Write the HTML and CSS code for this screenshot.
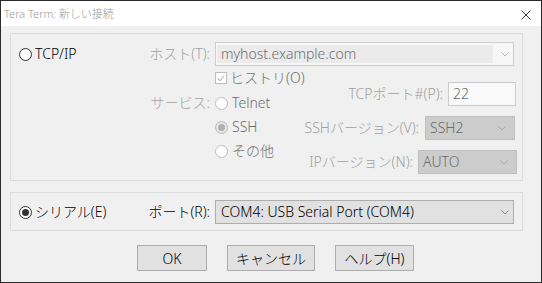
FILE: index.html
```html
<!DOCTYPE html>
<html lang="ja">
<head>
    <meta charset="UTF-8">
    <title>Tera Term: 新しい接続</title>
    <link rel="stylesheet" href="styles.css">
</head>
<body>
    <div class="window">
        <div class="titlebar">
            <span class="title">Tera Term: 新しい接続</span>
            <svg class="close" width="10" height="10" viewBox="0 0 10 10">
                <path d="M0.5 0.5 L9.5 9.5 M9.5 0.5 L0.5 9.5" stroke="#333" stroke-width="1" fill="none"/>
            </svg>
        </div>
        <div class="content">
            <div class="group group-tcp">
                <div class="row-host">
                    <div class="left-col">
                        <span class="radio-main"><span class="rb"></span>TCP/IP</span>
                        <span class="lbl">ホスト(T):</span>
                    </div>
                    <div class="combo combo-host">
                        <span class="edit">myhost.example.com</span>
                        <svg class="chev" width="8" height="5" viewBox="0 0 8 5"><path d="M0.5 0.5 L4 4 L7.5 0.5" stroke="#b5b5b5" fill="none"/></svg>
                    </div>
                </div>
                <div class="tcp-lower">
                    <div class="left-col svc-label"><span class="lbl">サービス:</span></div>
                    <div class="svc-list">
                        <div class="check-row">
                            <span class="cb">
                                <svg width="11" height="11" viewBox="0 0 11 11"><path d="M2 5.5 L4.5 8 L9 2.5" stroke="#b5b5b5" stroke-width="1.2" fill="none"/></svg>
                            </span>
                            <span class="dim">ヒストリ(O)</span>
                        </div>
                        <div class="opt"><span class="rb off"></span><span class="dim">Telnet</span></div>
                        <div class="opt"><span class="rb off on"></span><span class="dim">SSH</span></div>
                        <div class="opt"><span class="rb off"></span><span class="dim">その他</span></div>
                    </div>
                    <div class="fields">
                        <div class="field f-port">
                            <span class="lbl">TCPポート#(P):</span>
                            <span class="textbox">22</span>
                        </div>
                        <div class="field f-ssh">
                            <span class="lbl">SSHバージョン(V):</span>
                            <span class="select">SSH2<svg class="chev" width="8" height="5" viewBox="0 0 8 5"><path d="M0.5 0.5 L4 4 L7.5 0.5" stroke="#a8a8a8" fill="none"/></svg></span>
                        </div>
                        <div class="field f-ip">
                            <span class="lbl">IPバージョン(N):</span>
                            <span class="select">AUTO<svg class="chev" width="8" height="5" viewBox="0 0 8 5"><path d="M0.5 0.5 L4 4 L7.5 0.5" stroke="#a8a8a8" fill="none"/></svg></span>
                        </div>
                    </div>
                </div>
            </div>

            <div class="group group-serial">
                <div class="left-col">
                    <span class="radio-main"><span class="rb on"></span>シリアル(E)</span>
                    <span class="lbl-on">ポート(R):</span>
                </div>
                <div class="combo combo-port">
                    <span>COM4: USB Serial Port (COM4)</span>
                    <svg class="chev" width="8" height="5" viewBox="0 0 8 5"><path d="M0.5 0.5 L4 4 L7.5 0.5" stroke="#8a8a8a" fill="none"/></svg>
                </div>
            </div>

            <div class="buttons">
                <button class="btn btn-ok">OK</button>
                <button class="btn btn-cancel">キャンセル</button>
                <button class="btn btn-help">ヘルプ(H)</button>
            </div>
        </div>
    </div>
</body>
</html>
```

FILE: styles.css
```css
body {
    margin: 0;
    padding: 0;
    background-color: #f0f0f0;
    font-family: "Noto Sans", "Noto Sans CJK JP", sans-serif;
    font-size: 14px;
    font-weight: 300;
    line-height: 16px;
    white-space: nowrap;
}
.window {
    width: 542px;
    height: 283px;
    box-sizing: border-box;
    border: 1px solid #2b2b2b;
    background-color: #f0f0f0;
}
.titlebar {
    height: 25px;
    background-color: white;
    display: flex;
    justify-content: space-between;
    align-items: center;
    padding-left: 3px;
    padding-right: 10px;
}
.title {
    font-size: 11px;
    color: #999;
}
.close {
    margin-top: 2px;
}
.content {
    padding: 7px 0 0 9px;
}
.group {
    box-sizing: border-box;
    width: 513px;
    border: 1px solid #dcdcdc;
}
.group-tcp {
    height: 148px;
    padding-top: 8px;
}
.group-serial {
    height: 39px;
    margin-top: 11px;
    padding-top: 7px;
    display: flex;
}
.row-host {
    display: flex;
    height: 24px;
}
.left-col {
    width: 204px;
    flex-shrink: 0;
    box-sizing: border-box;
    padding-left: 8px;
    padding-right: 5px;
    display: flex;
    justify-content: space-between;
    align-items: center;
    height: 24px;
}
.radio-main {
    display: flex;
    align-items: center;
    color: #000;
}
.lbl {
    color: #a0a0a0;
}
.lbl-on {
    color: #000;
}
.dim {
    color: #6d6d6d;
}
.rb {
    width: 13px;
    height: 13px;
    flex-shrink: 0;
    box-sizing: border-box;
    border: 1px solid #333;
    border-radius: 50%;
    background-color: white;
    margin-right: 3px;
    display: flex;
    align-items: center;
    justify-content: center;
}
.rb.on::after {
    content: "";
    width: 7px;
    height: 7px;
    border-radius: 50%;
    background-color: #333;
}
.rb.off {
    border-color: #bcbcbc;
    margin-right: 4px;
}
.rb.off.on {
    background-color: #e6e6e6;
}
.rb.off.on::after {
    background-color: #b0b0b0;
}
.combo {
    box-sizing: border-box;
    width: 299px;
    height: 24px;
    display: flex;
    align-items: center;
    justify-content: space-between;
    padding-right: 4px;
}
.combo-host {
    border: 1px solid #cccccc;
    background-color: #f7f7f7;
    padding-left: 1px;
}
.combo-host .edit {
    flex: 1;
    height: 18px;
    line-height: 18px;
    background-color: #ebebeb;
    color: #6d6d6d;
    padding-left: 4px;
    margin-right: 8px;
}
.combo-port {
    border: 1px solid #adadad;
    background-color: #e1e1e1;
    padding-left: 5px;
    color: #000;
}
.tcp-lower {
    display: flex;
    margin-top: 4px;
}
.svc-label {
    justify-content: flex-end;
    margin-top: 21px;
}
.svc-list {
    display: flex;
    flex-direction: column;
    flex-shrink: 0;
}
.check-row {
    display: flex;
    align-items: center;
    height: 16px;
    margin-bottom: 5px;
}
.cb {
    width: 12px;
    height: 12px;
    box-sizing: border-box;
    border: 1px solid #bcbcbc;
    background-color: white;
    margin-right: 3px;
    display: flex;
}
.opt {
    display: flex;
    align-items: center;
    height: 24px;
}
.fields {
    flex: 1;
    min-width: 0;
    display: flex;
    flex-direction: column;
    align-items: flex-end;
    padding-top: 12px;
    gap: 10px;
}
.field {
    display: flex;
    align-items: center;
    height: 24px;
    flex-shrink: 0;
}
.textbox, .select {
    box-sizing: border-box;
    height: 24px;
    flex-shrink: 0;
    display: flex;
    align-items: center;
    justify-content: space-between;
    padding-left: 4px;
    color: #6d6d6d;
}
.textbox {
    width: 68px;
    border: 1px solid #cccccc;
    background-color: #f9f9f9;
}
.select {
    border: 1px solid #bfbfbf;
    background-color: #cccccc;
    padding-right: 8px;
}
.f-port {
    margin-right: 6px;
}
.f-port .textbox {
    margin-left: 5px;
}
.f-ssh {
    margin-right: 7px;
}
.f-ssh .select {
    width: 90px;
    margin-left: 6px;
}
.f-ip {
    margin-right: 5px;
}
.f-ip .select {
    width: 99px;
    margin-left: 5px;
}
.buttons {
    display: flex;
    gap: 20px;
    margin-top: 14px;
    padding-left: 127px;
}
.btn {
    height: 26px;
    border: 1px solid #adadad;
    background-color: #e1e1e1;
    font-family: inherit;
    font-size: 14px;
    font-weight: 300;
    color: #000;
    padding: 0;
}
.btn-ok {
    width: 70px;
}
.btn-cancel {
    width: 88px;
}
.btn-help {
    width: 79px;
}
```
